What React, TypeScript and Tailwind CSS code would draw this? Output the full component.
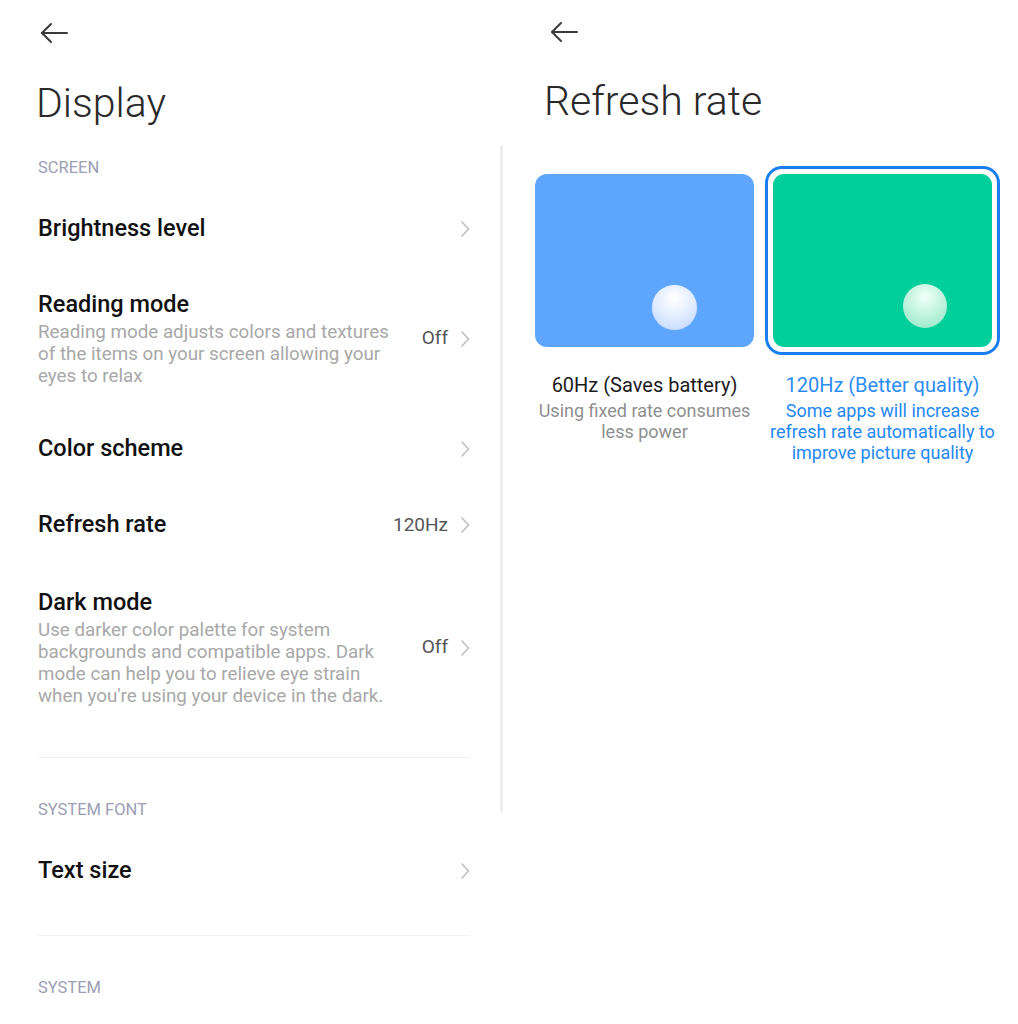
import React from "react";

const font = { fontFamily: 'Roboto, "Noto Sans", "Liberation Sans", sans-serif' };

function BackArrow() {
  return (
    <svg width="30" height="22" viewBox="0 0 30 22" fill="none">
      <path d="M3 11H28" stroke="#3a3a3a" strokeWidth="2" strokeLinecap="round" />
      <path d="M12 2L3 11L12 20" stroke="#3a3a3a" strokeWidth="2" strokeLinecap="round" strokeLinejoin="round" />
    </svg>
  );
}

function Chevron() {
  return (
    <svg width="10" height="18" viewBox="0 0 10 18" fill="none" className="shrink-0">
      <path d="M2 2L8.5 9L2 16" stroke="#bdbdbd" strokeWidth="1.5" strokeLinecap="round" strokeLinejoin="round" />
    </svg>
  );
}

function SectionHeader({ children }: { children: React.ReactNode }) {
  return (
    <div className="h-[48px] flex items-center text-[16.5px] text-[#9c9eb4]">{children}</div>
  );
}

function SimpleRow({ title, value }: { title: string; value?: string }) {
  return (
    <div className="flex items-center justify-between">
      <div className="text-[23.5px] font-medium text-[#111]">{title}</div>
      <div className="flex items-center gap-[12px]">
        {value && <span className="text-[19px] text-[#555]">{value}</span>}
        <Chevron />
      </div>
    </div>
  );
}

function DescRow({ title, desc, value }: { title: string; desc: React.ReactNode; value: string }) {
  return (
    <div className="flex items-center justify-between pt-[25px] pb-[24px]">
      <div className="flex flex-col gap-[3px] whitespace-nowrap">
        <div className="text-[23.5px] leading-[28px] font-medium text-[#111]">{title}</div>
        <div className="text-[18.8px] leading-[22px] text-[#a8a8a8]">{desc}</div>
      </div>
      <div className="flex items-center gap-[12px] shrink-0">
        <span className="text-[19px] text-[#555]">{value}</span>
        <Chevron />
      </div>
    </div>
  );
}

export default function App() {
  return (
    <div className="w-[1018px] h-[1024px] bg-white flex overflow-hidden" style={font}>
      {/* Left panel */}
      <div className="relative w-[510px] h-full pl-[38px] pr-[40px] flex flex-col">
        <div className="h-[64px] flex items-center pl-[1px] pt-[1px]">
          <BackArrow />
        </div>
        <div className="h-[80px] flex items-center text-[41px] font-light text-[#2a2a2a] -ml-[2px]">Display</div>
        <SectionHeader>SCREEN</SectionHeader>
        <div className="h-[73px] flex flex-col justify-center">
          <SimpleRow title="Brightness level" />
        </div>
        <DescRow
          title="Reading mode"
          value="Off"
          desc={
            <>
              Reading mode adjusts colors and textures
              <br />
              of the items on your screen allowing your
              <br />
              eyes to relax
            </>
          }
        />
        <div className="h-[76px] flex flex-col justify-center">
          <SimpleRow title="Color scheme" />
        </div>
        <div className="h-[76px] flex flex-col justify-center">
          <SimpleRow title="Refresh rate" value="120Hz" />
        </div>
        <DescRow
          title="Dark mode"
          value="Off"
          desc={
            <>
              Use darker color palette for system
              <br />
              backgrounds and compatible apps. Dark
              <br />
              mode can help you to relieve eye strain
              <br />
              when you're using your device in the dark.
            </>
          }
        />
        <div className="mt-[26px] h-px bg-[#f0f0f0]" />
        <div className="h-[28px]" />
        <SectionHeader>SYSTEM FONT</SectionHeader>
        <div className="h-[73px] flex flex-col justify-center">
          <SimpleRow title="Text size" />
        </div>
        <div className="mt-[28px] h-px bg-[#f0f0f0]" />
        <div className="h-[28px]" />
        <SectionHeader>SYSTEM</SectionHeader>
        {/* scrollbar */}
        <div className="absolute left-[500px] top-[145px] w-[3px] h-[667px] rounded-full bg-[#ededed]" />
      </div>

      {/* Right panel */}
      <div className="flex-1 h-full pl-[25px] flex flex-col">
        <div className="h-[64px] flex items-center pl-[14px]">
          <BackArrow />
        </div>
        <div className="h-[76px] flex items-center pl-[9px] text-[41px] font-light text-[#2a2a2a]">Refresh rate</div>
        <div className="mt-[34px] flex gap-[19px]">
          {/* 60Hz option */}
          <div className="w-[219px] flex flex-col items-center">
            <div className="w-[219px] h-[173px] rounded-[12px] bg-[#5ea6fd] flex items-end justify-end pr-[57px] pb-[17px]">
              <div className="w-[45px] h-[45px] rounded-full bg-[radial-gradient(circle_at_50%_30%,#ffffff_0%,#eaf2ff_35%,#bcd6ff_100%)] shadow-[0_0_1px_rgba(255,255,255,0.6)]" />
            </div>
            <div className="mt-[25px] text-center whitespace-nowrap">
              <div className="text-[20px] leading-[26px] text-[#1c1c1c]">60Hz (Saves battery)</div>
              <div className="mt-[2px] text-[18px] leading-[21px] text-[#8f8f8f]">
                Using fixed rate consumes
                <br />
                less power
              </div>
            </div>
          </div>
          {/* 120Hz option */}
          <div className="w-[219px] flex flex-col items-center">
            <div className="relative w-[219px] h-[173px]">
              <div className="absolute -left-[8px] -top-[8px] -right-[8px] -bottom-[8px] rounded-[17px] border-[3px] border-[#1a7ef1]" />
              <div className="relative w-full h-full rounded-[11px] bg-[#00cf9c] flex items-end justify-end pr-[45px] pb-[19px]">
                <div className="w-[44px] h-[44px] rounded-full bg-[radial-gradient(circle_at_50%_30%,#f2fffa_0%,#c8f5e4_40%,#90e5c6_100%)]" />
              </div>
            </div>
            <div className="mt-[25px] text-center whitespace-nowrap">
              <div className="text-[20px] leading-[26px] text-[#2c8cf2]">120Hz (Better quality)</div>
              <div className="mt-[2px] text-[18px] leading-[21px] text-[#1e88f4]">
                Some apps will increase
                <br />
                refresh rate automatically to
                <br />
                improve picture quality
              </div>
            </div>
          </div>
        </div>
      </div>
    </div>
  );
}
